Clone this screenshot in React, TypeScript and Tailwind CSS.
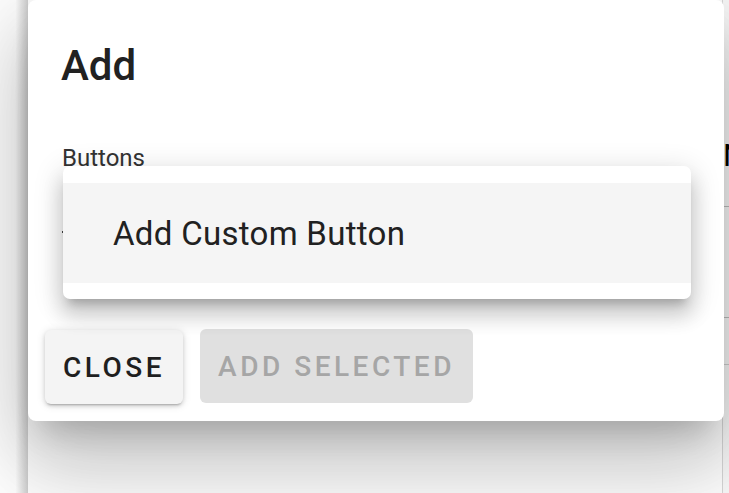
export default function App() {
  return (
    <div className="relative h-[493px] w-[729px] overflow-hidden bg-white font-['Roboto',sans-serif] text-[#212121]">
      {/* page behind the dialog */}
      <div className="flex h-full">
        <div className="w-[28px] bg-linear-to-r from-white from-55% to-[#cfcfcf]" />
        <div className="flex-1 bg-white" />
        <div className="flex w-[7px] flex-col overflow-hidden border-l border-[#d8d8d8] bg-[#fafafa]">
          <div className="mt-[136px] h-[71px] border-b border-[#bdbdbd] text-[31px] leading-[40px] text-black">
            <span className="block">N</span>
          </div>
          <div className="h-[111px] border-b border-[#bdbdbd]" />
          <div className="h-[47px] border-b border-[#d0d0d0]" />
        </div>
      </div>

      {/* dialog */}
      <div className="absolute left-[28px] top-0 flex h-[421px] w-[696px] flex-col rounded-[8px] bg-white shadow-[0_22px_30px_-14px_rgba(0,0,0,0.2),0_48px_76px_6px_rgba(0,0,0,0.14),0_18px_92px_16px_rgba(0,0,0,0.12)]">
        <h2 className="px-[33px] pt-[34px] text-[42px] font-medium leading-[64px] text-[#212121]">Add</h2>
        <div className="mt-[42px] px-[34px]">
          <div className="text-[24px] leading-[36px] text-[#333]">Buttons</div>
          <div className="relative h-[90px]">
            <span className="absolute left-0 top-[55px] h-[2px] w-[2px] bg-[#444]" />
          </div>
        </div>
        <div className="mt-auto flex gap-[17px] px-[17px] pb-[17px]">
          <button className="h-[74px] rounded-[6px] bg-[#f4f4f4] px-[18px] pt-[2px] text-[28px] font-medium tracking-[3.5px] text-[#1f1f1f] shadow-[0_3px_2px_-2px_rgba(0,0,0,0.2),0_2px_4px_0_rgba(0,0,0,0.14),0_1px_10px_0_rgba(0,0,0,0.12)]">
            CLOSE
          </button>
          <button className="-mt-px h-[74px] rounded-[6px] bg-[#e0e0e0] px-[18px] pt-[2px] text-[28px] font-medium tracking-[3.5px] text-[#a6a6a6]">
            ADD SELECTED
          </button>
        </div>

        {/* open menu */}
        <div className="absolute left-[35px] top-[166px] w-[628px] rounded-[7px] bg-white pb-[16px] pt-[17px] shadow-[0_10px_10px_-6px_rgba(0,0,0,0.2),0_16px_20px_2px_rgba(0,0,0,0.14),0_6px_28px_4px_rgba(0,0,0,0.12)]">
          <div className="flex h-[100px] items-center bg-[#f5f5f5] pl-[50px] pt-[2px] text-[33px] tracking-[0.3px] text-[#212121]">
            Add Custom Button
          </div>
        </div>
      </div>
    </div>
  );
}
